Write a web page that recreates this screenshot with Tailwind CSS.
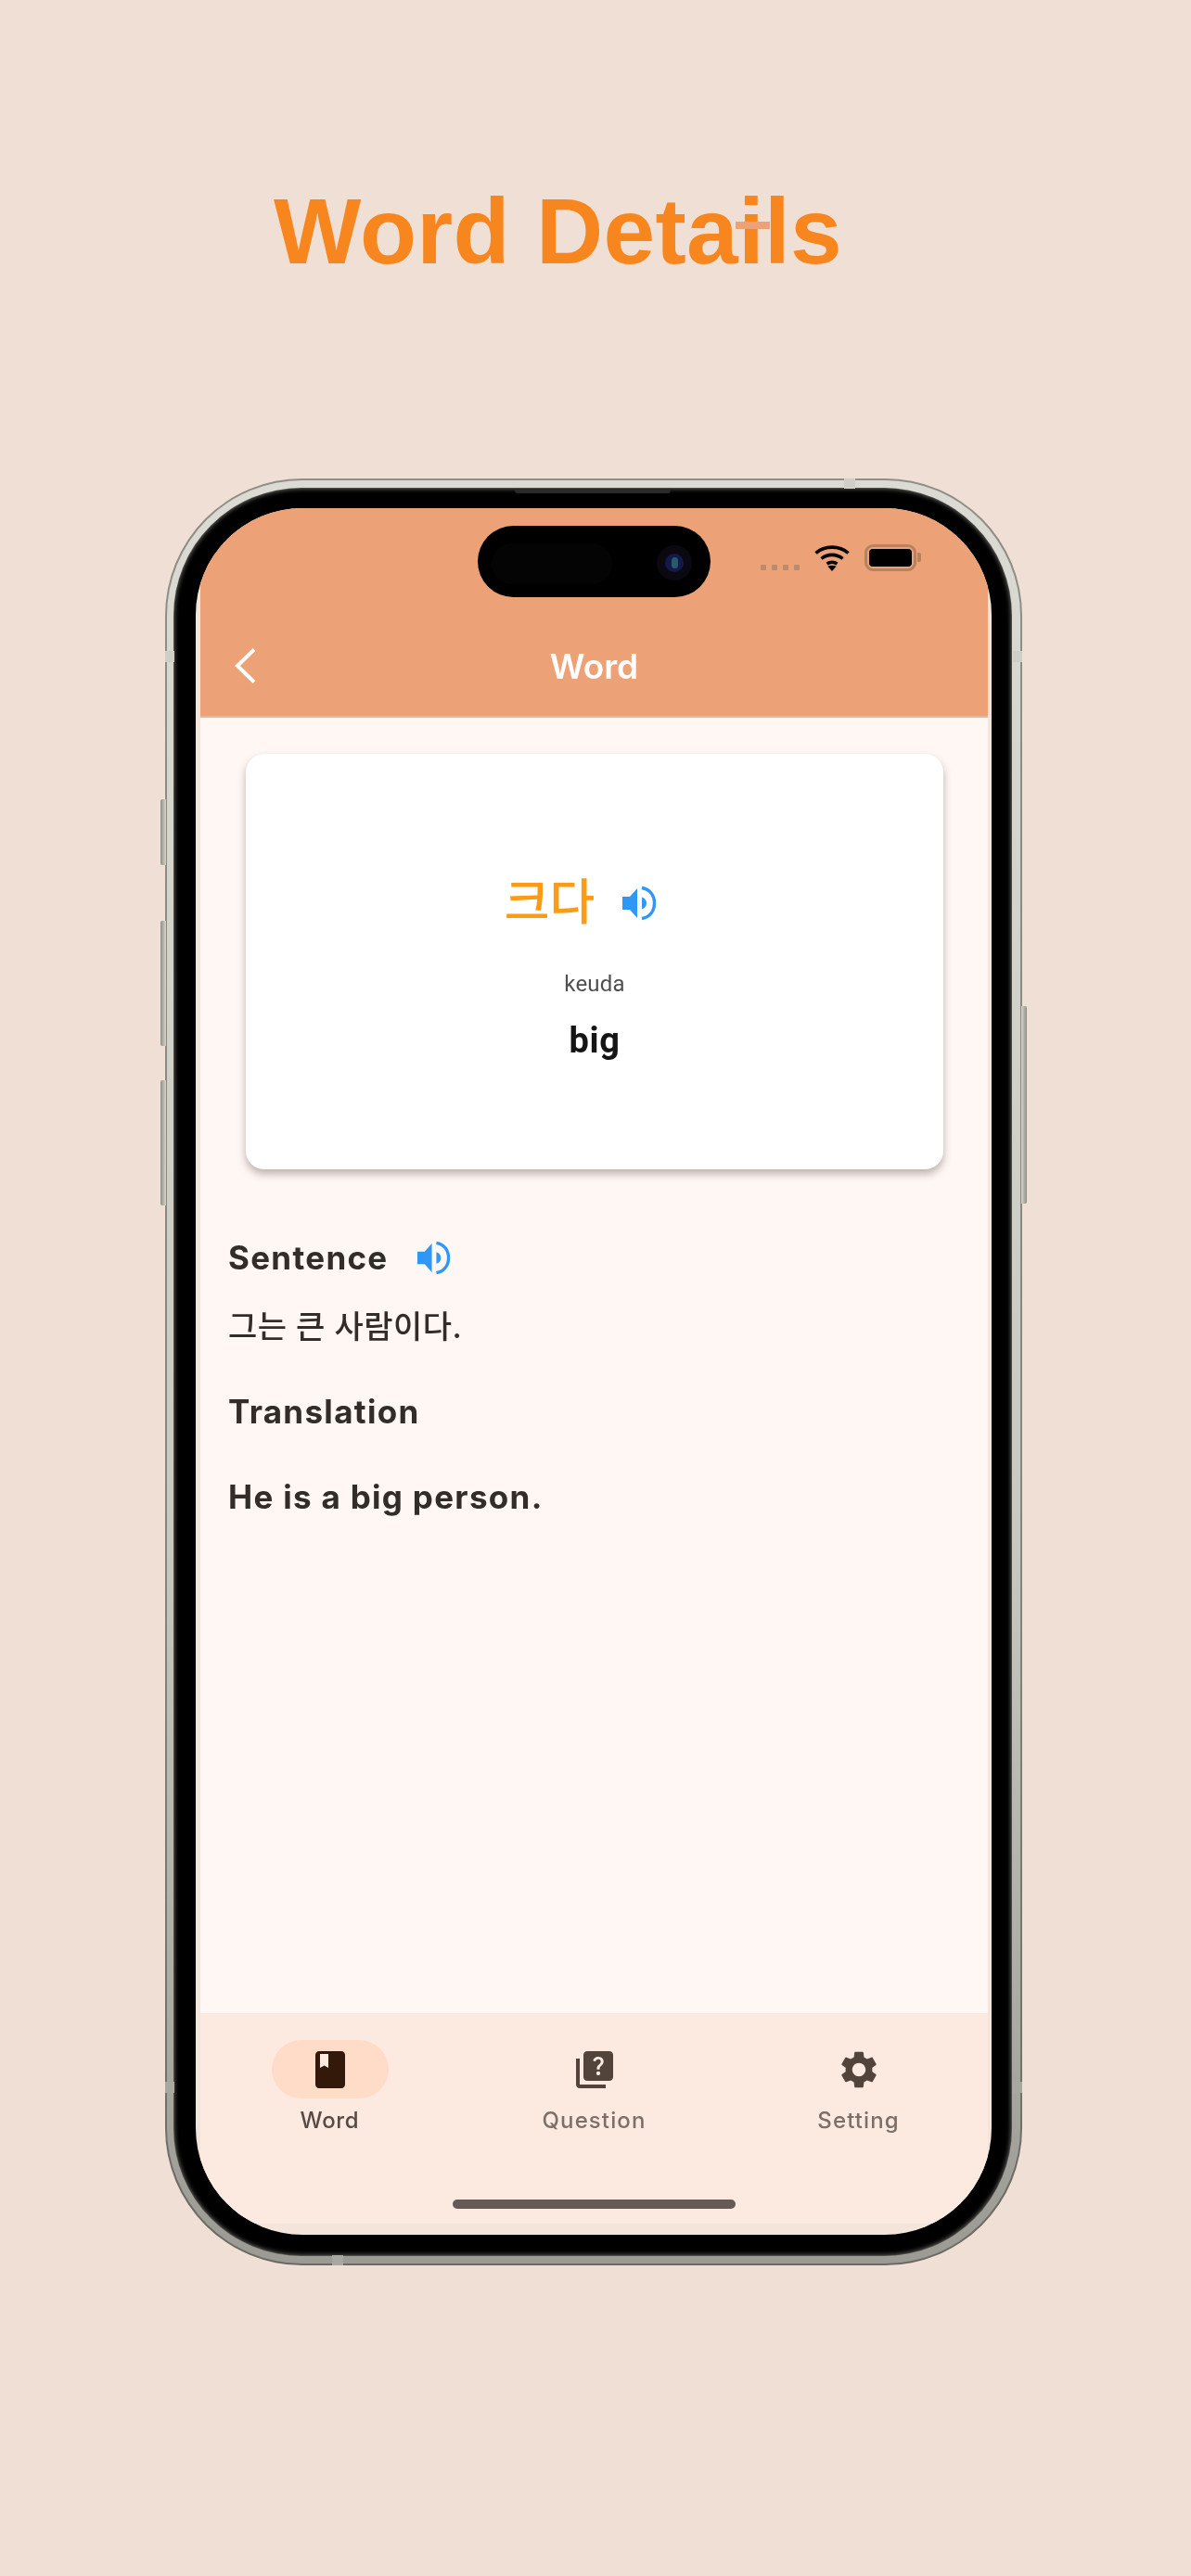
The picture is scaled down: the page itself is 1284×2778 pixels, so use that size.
<!DOCTYPE html>
<html lang="en">

<head>
    <meta charset="UTF-8">
    <meta name="viewport" content="width=device-width, initial-scale=1.0">
    <title>Word Details</title>
    <script src="https://cdn.jsdelivr.net/npm/@tailwindcss/browser@4"></script>
</head>

<body class="bg-[#f0dfd4] font-['Inter','Noto_Sans_CJK_KR',sans-serif] text-[#332d2a]">
    <div class="w-[1284px] h-[2778px] overflow-hidden pt-[192px]">
        <!-- heading -->
        <h1 class="relative w-fit ml-[295px] font-['Liberation_Sans',sans-serif] font-bold text-[100px] leading-[115px] tracking-[0.3px] text-[#f8861e]">
            Word Details
            <span class="absolute left-[498px] top-[47px] w-[37px] h-[8px] bg-[#eca276]"></span>
        </h1>

        <!-- phone -->
        <div class="relative w-[924px] h-[1927px] ml-[178px] mt-[209px]">
            <!-- side buttons -->
            <div class="absolute left-[-5px] top-[346px] w-[6px] h-[71px] rounded-l-[2px] bg-[linear-gradient(90deg,#8f8e87,#d6d5cd)]"></div>
            <div class="absolute left-[-5px] top-[477px] w-[6px] h-[135px] rounded-l-[2px] bg-[linear-gradient(90deg,#8f8e87,#d6d5cd)]"></div>
            <div class="absolute left-[-5px] top-[649px] w-[6px] h-[135px] rounded-l-[2px] bg-[linear-gradient(90deg,#8f8e87,#d6d5cd)]"></div>
            <div class="absolute right-[-5px] top-[569px] w-[6px] h-[213px] rounded-r-[2px] bg-[linear-gradient(270deg,#8f8e87,#d6d5cd)]"></div>

            <div class="h-full rounded-[148px] p-[2px] bg-[linear-gradient(180deg,#8f8e87,#85847d_60%,#6a6964)]">
                <div class="h-full rounded-[146px] pt-[8px] pb-[8px] pl-[7px] pr-[9px] bg-[linear-gradient(180deg,#dcdbd3,#c9c8c0_60%,#9b9a93)]">
                    <div class="h-full rounded-[138px] p-[1px] bg-[#4a4a46]">
                        <div class="h-full rounded-[137px] pt-[21px] pb-[22px] pl-[23px] pr-[21px] bg-black shadow-[inset_0_0_5px_#6a6a66]">
                            <!-- screen -->
                            <div class="relative h-[1862px] rounded-[115px] overflow-hidden bg-[#f3e5db] pl-[5px] pr-[4px] pb-[12px] flex flex-col">
                                <header class="h-[226px] shrink-0 bg-[#eca276] border-b-2 border-[#efb596] relative">
                                    <svg class="absolute left-[37px] top-[151px] w-[22px] h-[38px] blur-[0.4px]" viewBox="0 0 22 38" fill="none" stroke="#fff" stroke-width="4">
                                        <path d="M21 1.5 3 19l18 17.5" />
                                    </svg>
                                    <div class="absolute inset-x-0 top-[148px] text-center text-white font-semibold text-[37px] leading-[46px] blur-[0.5px]">Word</div>
                                </header>

                                <main class="flex-1 bg-[#fff7f3]">
                                    <div class="mt-[39px] ml-[49px] w-[752px] h-[448px] rounded-[20px] bg-white shadow-[0_5px_9px_rgba(60,50,45,0.35)] flex flex-col items-center pt-[116px]">
                                        <div class="flex items-center gap-[29px] mr-[30px] h-[80px] blur-[0.5px]">
                                            <span class="text-[#ff9a14] text-[53px] leading-[80px] font-medium font-['Noto_Sans_CJK_KR',sans-serif]">크다</span>
                                            <svg class="w-[38px] h-[38px] mt-[10px]" viewBox="0 0 38 38" fill="#2f97f5">
                                                <path d="M1 12h8l8-9v32l-8-9H1z" />
                                                <path d="M22 12.5c3 .8 5 3.4 5 6.5s-2 5.7-5 6.5z" />
                                                <path fill="none" stroke="#2f97f5" stroke-width="3.4" d="M22 2.5C31 4 35.5 11 35.5 19S31 34 22 35.5" />
                                            </svg>
                                        </div>
                                        <p class="mt-[36px] font-['Roboto',sans-serif] text-[24px] leading-[32px] tracking-[0.2px] text-[#4f4f4f] blur-[0.4px]">keuda</p>
                                        <p class="mt-[22px] font-['Roboto',sans-serif] font-bold text-[38px] leading-[46px] tracking-[0.6px] text-[#151515] blur-[0.4px]">big</p>
                                    </div>

                                    <div class="mt-[73px] pl-[30px] blur-[0.5px]">
                                        <div class="flex items-center h-[44px]">
                                            <h2 class="text-[35px] leading-[44px] font-bold tracking-[1.3px]">Sentence</h2>
                                            <svg class="ml-[30px] w-[37px] h-[37px]" viewBox="0 0 38 38" fill="#2f97f5">
                                                <path d="M1 12h8l8-9v32l-8-9H1z" />
                                                <path d="M22 12.5c3 .8 5 3.4 5 6.5s-2 5.7-5 6.5z" />
                                                <path fill="none" stroke="#2f97f5" stroke-width="3.4" d="M22 2.5C31 4 35.5 11 35.5 19S31 34 22 35.5" />
                                            </svg>
                                        </div>
                                        <p class="mt-[31px] text-[34px] leading-[44px] font-medium tracking-[0.5px]">그는 큰 사람이다.</p>
                                        <p class="mt-[47px] text-[35px] leading-[44px] font-bold tracking-[1.3px]">Translation</p>
                                        <p class="mt-[48px] text-[35px] leading-[44px] font-bold tracking-[1.3px]">He is a big person.</p>
                                    </div>
                                </main>

                                <!-- bottom navigation -->
                                <nav class="relative h-[227px] shrink-0 bg-[#fce9e0] grid grid-cols-[285px_285px_285px] justify-center pt-[29px]">
                                    <div class="flex flex-col items-center blur-[0.4px]">
                                        <div class="w-[126px] h-[63px] rounded-full bg-[#ffdcc8] flex items-center justify-center">
                                            <svg class="w-[48px] h-[48px]" viewBox="0 0 24 24" fill="#33190a">
                                                <path d="M18 2H6c-1.1 0-2 .9-2 2v16c0 1.1.9 2 2 2h12c1.1 0 2-.9 2-2V4c0-1.1-.9-2-2-2z" />
                                                <path fill="#ffeadf" d="M6.5 3.5h4.5v7.5l-2.2-1.3-2.3 1.3z" />
                                            </svg>
                                        </div>
                                        <span class="mt-[8px] text-[24px] leading-[32px] font-medium tracking-[0.7px] text-[#554b46]">Word</span>
                                    </div>
                                    <div class="flex flex-col items-center blur-[0.4px]">
                                        <div class="h-[63px] flex items-center justify-center">
                                            <svg class="w-[48px] h-[48px]" viewBox="0 0 24 24" fill="#52433b">
                                                <path d="M4 6H2v14c0 1.1.9 2 2 2h14v-2H4V6zm16-4H8c-1.1 0-2 .9-2 2v12c0 1.1.9 2 2 2h12c1.1 0 2-.9 2-2V4c0-1.1-.9-2-2-2zm-5.99 13c-.59 0-1.05-.47-1.05-1.05 0-.59.47-1.04 1.05-1.04.59 0 1.04.45 1.04 1.04 0 .58-.45 1.05-1.04 1.05zm2.5-6.17c-.63.93-1.23 1.21-1.56 1.81-.13.24-.18.4-.18 1.18h-1.52c0-.41-.06-1.08.26-1.65.41-.73 1.18-1.16 1.63-1.8.48-.68.21-1.94-1.14-1.94-.88 0-1.32.67-1.5 1.23l-1.37-.57C11.51 5.96 12.52 5 13.99 5c1.23 0 2.08.56 2.51 1.26.37.61.58 1.73.01 2.57z" />
                                            </svg>
                                        </div>
                                        <span class="mt-[8px] text-[24px] leading-[32px] font-medium tracking-[1.1px] text-[#7b6f69]">Question</span>
                                    </div>
                                    <div class="flex flex-col items-center blur-[0.4px]">
                                        <div class="h-[63px] flex items-center justify-center">
                                            <svg class="w-[48px] h-[48px]" viewBox="0 0 24 24" fill="#52433b">
                                                <path d="M19.14 12.94c.04-.3.06-.61.06-.94 0-.32-.02-.64-.07-.94l2.03-1.58c.18-.14.23-.41.12-.61l-1.92-3.32c-.12-.22-.37-.29-.59-.22l-2.39.96c-.5-.38-1.03-.7-1.62-.94l-.36-2.54c-.04-.24-.24-.41-.48-.41h-3.84c-.24 0-.43.17-.47.41l-.36 2.54c-.59.24-1.13.57-1.62.94l-2.39-.96c-.22-.08-.47 0-.59.22L2.74 8.87c-.12.21-.08.47.12.61l2.03 1.58c-.05.3-.09.63-.09.94s.02.64.07.94l-2.03 1.58c-.18.14-.23.41-.12.61l1.92 3.32c.12.22.37.29.59.22l2.39-.96c.5.38 1.03.7 1.62.94l.36 2.54c.05.24.24.41.48.41h3.84c.24 0 .44-.17.47-.41l.36-2.54c.59-.24 1.13-.56 1.62-.94l2.39.96c.22.08.47 0 .59-.22l1.92-3.32c.12-.22.07-.47-.12-.61l-2.01-1.58zM12 15.6c-1.98 0-3.6-1.62-3.6-3.6s1.62-3.6 3.6-3.6 3.6 1.62 3.6 3.6-1.62 3.6-3.6 3.6z" />
                                            </svg>
                                        </div>
                                        <span class="mt-[8px] text-[24px] leading-[32px] font-medium tracking-[1.1px] text-[#7b6f69]">Setting</span>
                                    </div>
                                    <div class="absolute left-[272px] top-[201px] w-[305px] h-[10px] rounded-full bg-[#655a55]"></div>
                                </nav>

                                <!-- dynamic island -->
                                <div class="absolute left-[304px] top-[19px] w-[251px] h-[77px] rounded-full bg-black">
                                    <div class="absolute left-[15px] top-[19px] w-[130px] h-[44px] rounded-full bg-[#040404]"></div>
                                    <div class="absolute left-[193px] top-[21px] w-[38px] h-[38px] rounded-full bg-[#0b0812] flex items-center justify-center">
                                        <div class="w-[20px] h-[20px] rounded-full bg-[#131a4a] flex items-center justify-center">
                                            <div class="w-[7px] h-[12px] rounded-full bg-[#2a5a6a]"></div>
                                        </div>
                                    </div>
                                </div>

                                <!-- status bar -->
                                <div class="absolute left-[609px] top-[61px] flex gap-[6px] blur-[0.3px]">
                                    <span class="w-[6px] h-[6px] rounded-[1px] bg-[#bb8b6c]"></span>
                                    <span class="w-[6px] h-[6px] rounded-[1px] bg-[#bb8b6c]"></span>
                                    <span class="w-[6px] h-[6px] rounded-[1px] bg-[#bb8b6c]"></span>
                                    <span class="w-[6px] h-[6px] rounded-[1px] bg-[#bb8b6c]"></span>
                                </div>
                                <svg class="absolute left-[667px] top-[39px] w-[38px] h-[29px] blur-[0.3px]" viewBox="0 0 38 29" fill="none" stroke="#000" stroke-width="3.6">
                                    <path d="M1.5 9.5C11 1 27 1 36.5 9.5" />
                                    <path d="M7.5 15.5c6.5-5.5 16.5-5.5 23 0" />
                                    <path d="M13.5 21c3.2-2.2 7.8-2.2 11 0" />
                                    <path fill="#000" stroke="none" d="M19 29l-4.6-5.2c2.6-1.5 6.6-1.5 9.2 0z" />
                                </svg>
                                <div class="absolute left-[721px] top-[39px] w-[56px] h-[29px] rounded-[9px] border-[3px] border-[#b5835f] p-[2px] blur-[0.3px]">
                                    <div class="w-full h-full rounded-[4px] bg-black"></div>
                                </div>
                                <div class="absolute left-[778px] top-[48px] w-[4px] h-[10px] rounded-r-[2px] bg-[#b5835f]"></div>
                            </div>
                        </div>
                    </div>
                </div>
            </div>

            <!-- speaker slot and antenna bands -->
            <div class="absolute left-[377px] top-[11px] w-[168px] h-[5px] rounded-b-[3px] bg-[#2a2a2a]"></div>
            <div class="absolute left-[732px] top-0 w-[12px] h-[11px] bg-[#cfcec7]"></div>
            <div class="absolute left-0 top-[186px] w-[10px] h-[12px] bg-[#cfcec7]"></div>
            <div class="absolute right-0 top-[186px] w-[10px] h-[12px] bg-[#cfcec7]"></div>
            <div class="absolute left-0 top-[1729px] w-[10px] h-[12px] bg-[#a8a7a0]"></div>
            <div class="absolute right-0 top-[1729px] w-[10px] h-[12px] bg-[#a8a7a0]"></div>
            <div class="absolute left-[180px] bottom-0 w-[12px] h-[11px] bg-[#a8a7a0]"></div>
        </div>
    </div>
</body>

</html>
